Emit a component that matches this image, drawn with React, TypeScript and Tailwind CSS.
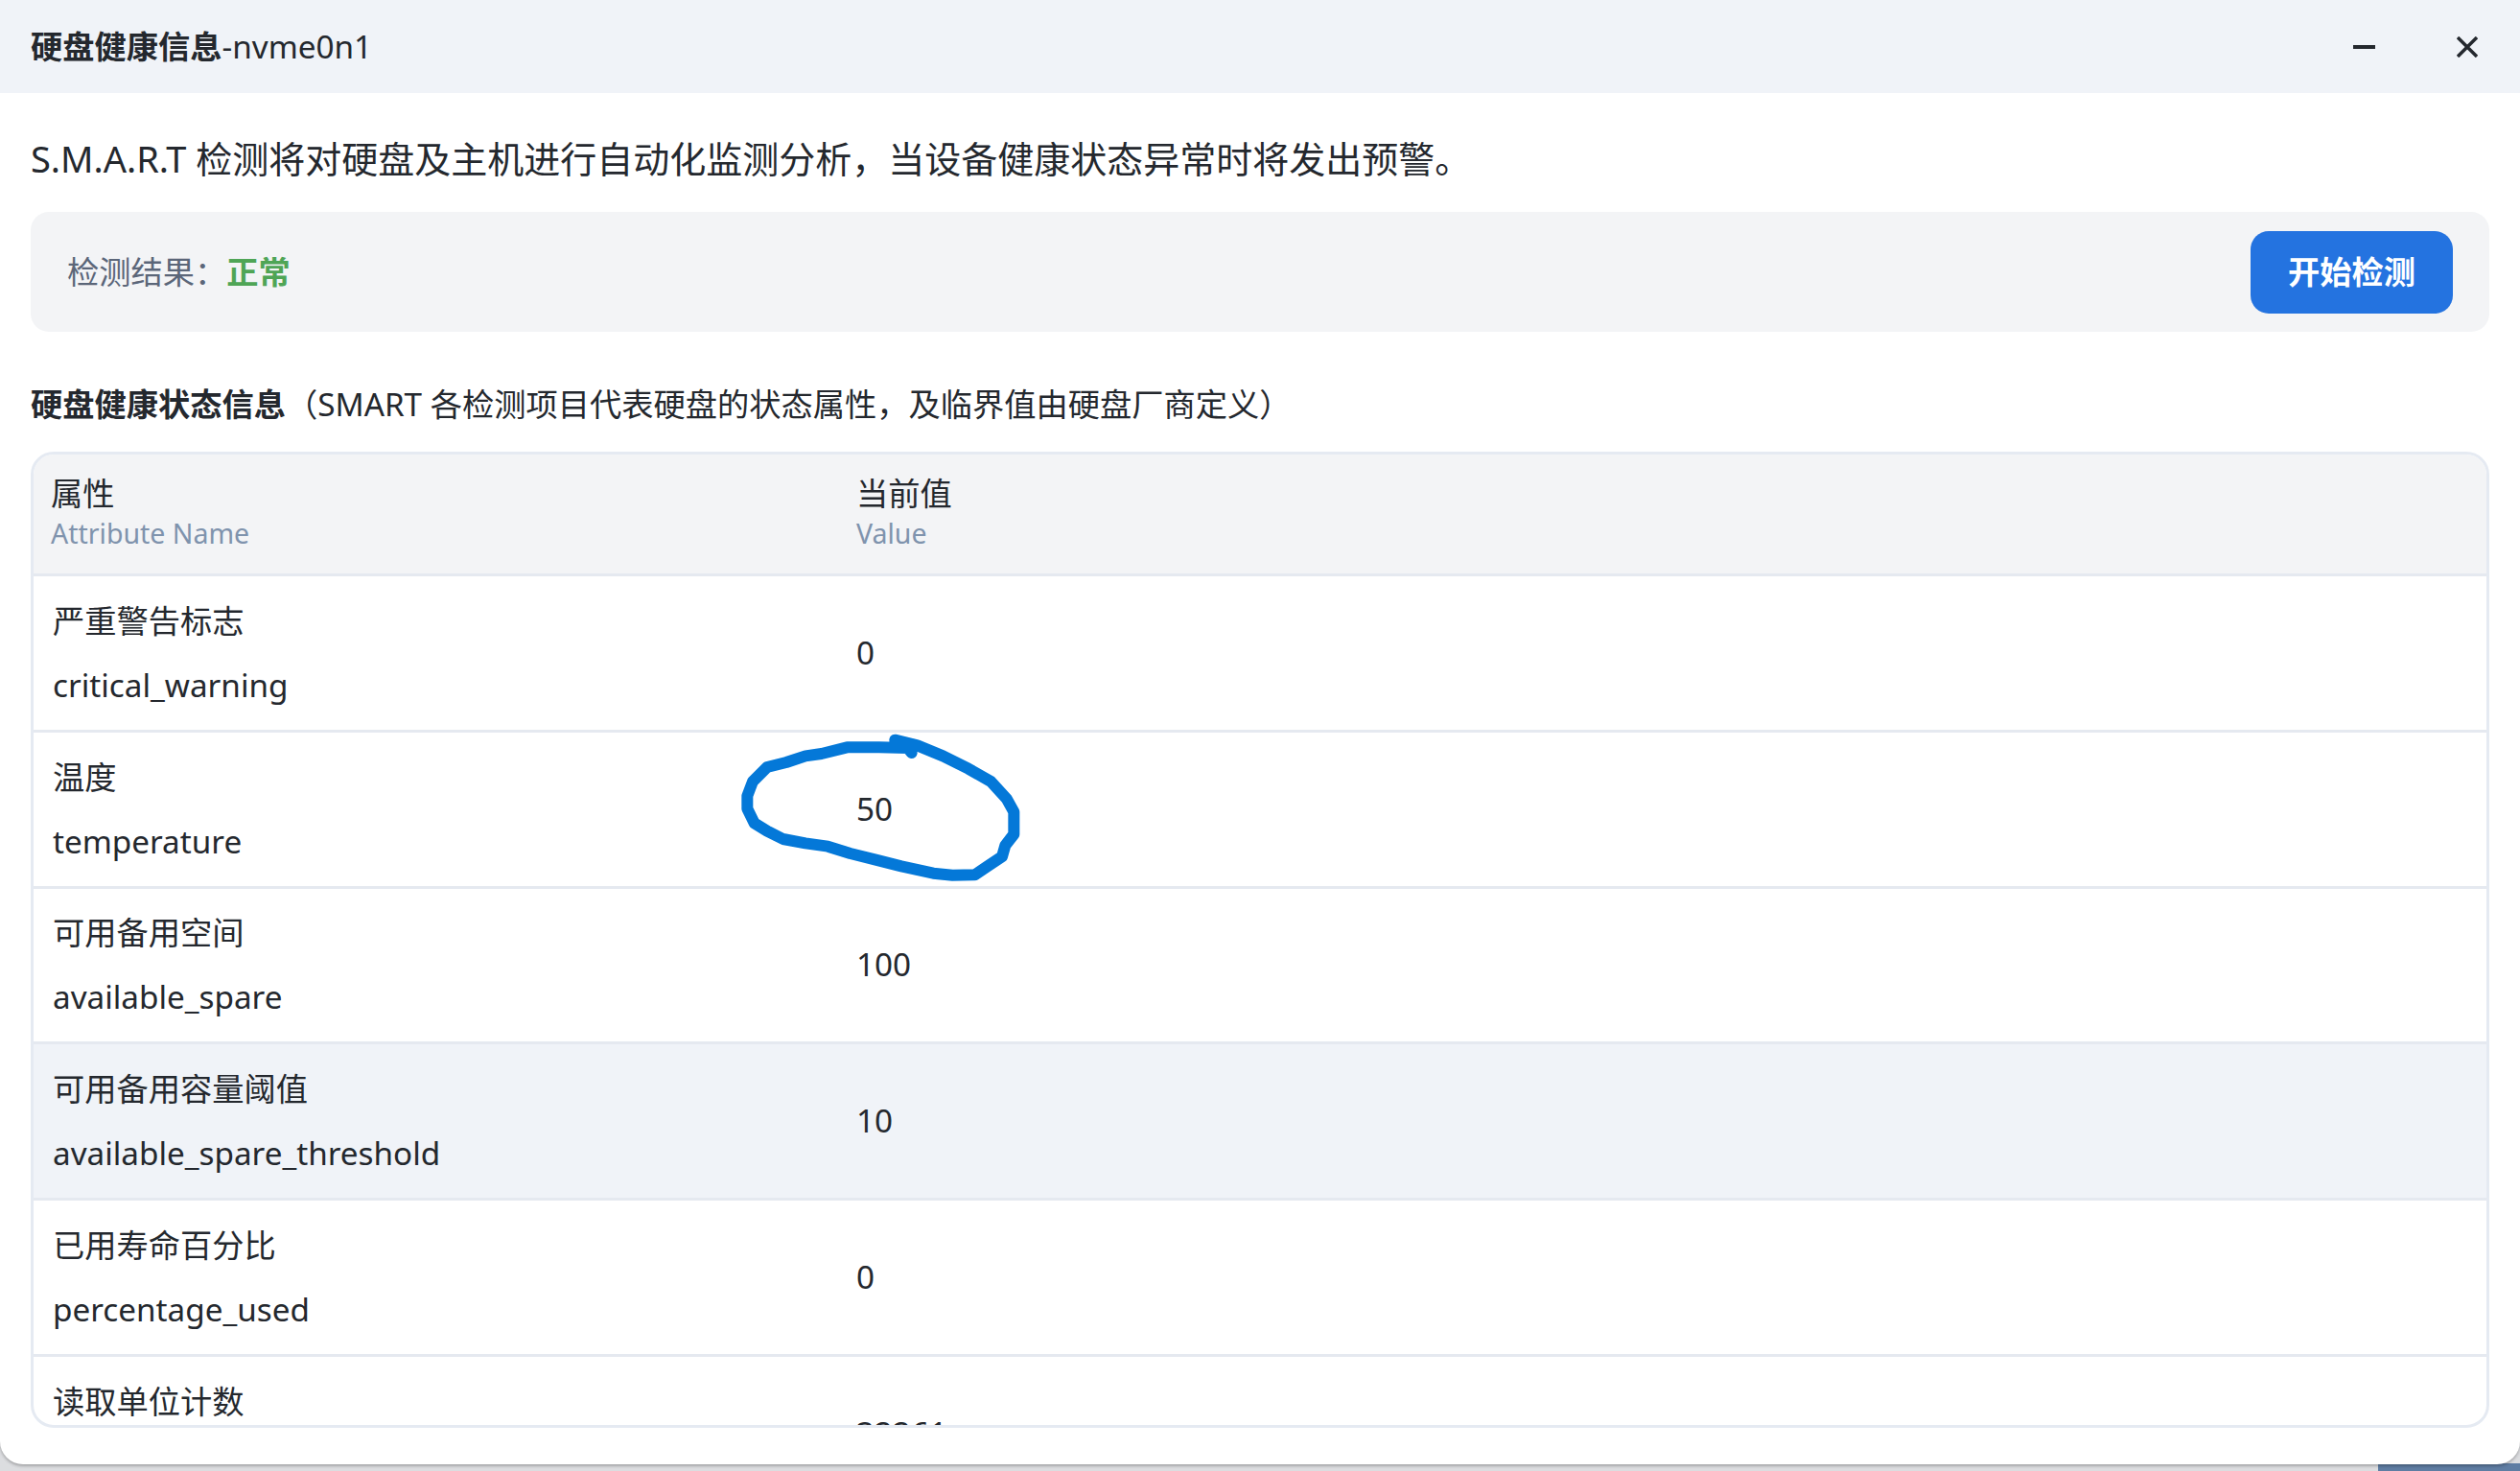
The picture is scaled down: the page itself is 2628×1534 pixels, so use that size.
const font = "font-['Noto_Sans','Noto_Sans_CJK_SC',sans-serif]";

const rows = [
  { zh: "严重警告标志", en: "critical_warning", value: "0" },
  { zh: "温度", en: "temperature", value: "50" },
  { zh: "可用备用空间", en: "available_spare", value: "100" },
  { zh: "可用备用容量阈值", en: "available_spare_threshold", value: "10", active: true },
  { zh: "已用寿命百分比", en: "percentage_used", value: "0" },
  { zh: "读取单位计数", en: "data_units_read", value: "32261" },
];

function Ink() {
  return (
    <svg viewBox="0 0 1200 660" className="absolute left-[700px] top-[740px] h-[220px] w-[400px]" fill="none">
      <path
        d="M700 95 L770 112 L850 145 L930 185 L1000 225 L1050 280 L1072 320 L1072 390 L1045 425 L1035 460 L990 490 L950 517 L880 518 L820 512 L720 490 L640 470 L560 450 L490 428 L420 418 L350 405 L300 380 L260 355 L238 310 L238 270 L255 225 L300 180 L360 165 L420 145 L470 138 L550 118 L650 118 L740 120 L752 135"
        stroke="#0478d8"
        strokeWidth="36"
        strokeLinecap="round"
        strokeLinejoin="round"
      />
    </svg>
  );
}

export default function App() {
  return (
    <div className={`relative h-[1534px] w-[2628px] overflow-hidden bg-[#dcdde0] ${font} text-[#24282e]`}>
      <div className="absolute bottom-0 right-0 h-[8px] w-[148px] bg-[#5f7da3]" />
      <div className="relative flex h-[1527px] flex-col rounded-b-[24px] bg-white shadow-[0_2px_3px_rgba(0,0,0,0.25)]">
        <div className="flex h-[97px] shrink-0 items-center justify-between bg-[#f0f3f8] pl-[32px] pr-[44px]">
          <div className="text-[33.25px]">
            <span className="font-bold">硬盘健康信息</span>-nvme0n1
          </div>
          <div className="flex items-center gap-[84px]">
            <svg width="24" height="24" viewBox="0 0 24 24" className="block">
              <path d="M0 12h23" stroke="#24282e" strokeWidth="4" />
            </svg>
            <svg width="22" height="22" viewBox="0 0 22 22" className="block">
              <path d="M1 1l20 20M21 1L1 21" stroke="#24282e" strokeWidth="3.5" />
            </svg>
          </div>
        </div>

        <div className="flex min-h-0 flex-1 flex-col px-[32px] pb-[38px]">
          <p className="mt-[38px] text-[38px] leading-[60px]">
            S.M.A.R.T 检测将对硬盘及主机进行自动化监测分析，当设备健康状态异常时将发出预警。
          </p>
          <div className="mt-[26px] flex h-[125px] shrink-0 items-center justify-between rounded-[19px] bg-[#f3f4f6] pl-[38px] pr-[38px]">
            <div className="text-[33.25px] text-[#5b6679]">
              检测结果：<span className="font-bold text-[#4fa556]">正常</span>
            </div>
            <button className="flex h-[86px] w-[211px] items-center justify-center rounded-[19px] bg-[#2473e0] text-[33.25px] font-bold text-white">
              开始检测
            </button>
          </div>
          <div className="mt-[50px] text-[33.25px] leading-[50px]">
            <span className="font-bold">硬盘健康状态信息</span>（SMART 各检测项目代表硬盘的状态属性，及临界值由硬盘厂商定义）
          </div>
          <div className="mt-[25px] min-h-0 flex-1 overflow-hidden rounded-[24px] border-[3px] border-[#e5eaf2]">
            <div className="grid h-[127px] grid-cols-[838px_1fr] border-b-[3px] border-[#e5e9f0] bg-[#f3f4f6]">
              <div className="pl-[18px] pt-[18px]">
                <div className="text-[33.25px] leading-[44px]">属性</div>
                <div className="text-[28.5px] leading-[40px] text-[#7f93ad]">Attribute Name</div>
              </div>
              <div className="pl-[20px] pt-[18px]">
                <div className="text-[33.25px] leading-[44px]">当前值</div>
                <div className="text-[28.5px] leading-[40px] text-[#7f93ad]">Value</div>
              </div>
            </div>
            {rows.map((r) => (
              <div
                key={r.en}
                className={`grid h-[162.75px] grid-cols-[838px_597px_1fr] border-b-[3px] border-[#e5e9f0] ${r.active ? "bg-[#f0f3f8]" : ""}`}
              >
                <div className="flex flex-col justify-center pl-[20px] text-[33.25px] leading-[67px]">
                  <div>{r.zh}</div>
                  <div>{r.en}</div>
                </div>
                <div className="flex items-center pl-[20px] text-[33.25px]">{r.value}</div>
                <div />
              </div>
            ))}
          </div>
        </div>
      </div>
      <Ink />
    </div>
  );
}
